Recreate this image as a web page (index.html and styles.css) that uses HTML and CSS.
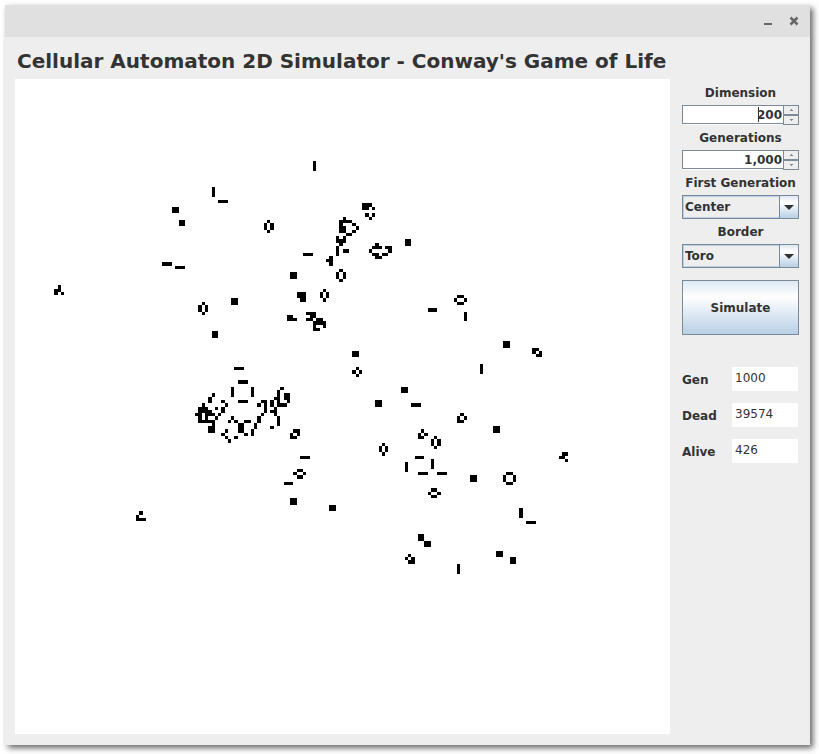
FILE: index.html
```html
<!DOCTYPE html>
<html lang="en">
<head>
<meta charset="utf-8">
<title>Cellular Automaton 2D Simulator</title>
<link rel="stylesheet" href="styles.css">
</head>
<body>
<div class="window">
  <header class="titlebar">
    <button class="winbtn" type="button" aria-label="Minimize"><svg width="10" height="10" viewBox="0 0 10 10"><path d="M1 8h8" stroke="#666" stroke-width="2"/></svg></button>
    <button class="winbtn" type="button" aria-label="Close"><svg width="10" height="10" viewBox="0 0 10 10"><path d="M1.5 1.5l7 7M8.5 1.5l-7 7" stroke="#666" stroke-width="2.5"/></svg></button>
  </header>
  <main class="content">
    <h1 class="heading">Cellular Automaton 2D Simulator - Conway's Game of Life</h1>
    <div class="columns">
      <svg class="board" id="board" viewBox="0 0 200 200" role="img" aria-label="Cell grid"></svg>
      <form class="side">
        <label class="label" for="dimension">Dimension</label>
        <div class="spinner">
          <input class="spin-input" id="dimension" type="text" value="200">
          <span class="caret"></span>
          <div class="spin-buttons">
            <button class="spin" type="button" aria-label="Increase dimension"><svg width="5" height="3" viewBox="0 0 5 3"><path d="M2 0h1v1h1v1H1V1h1z"/></svg></button>
            <button class="spin" type="button" aria-label="Decrease dimension"><svg width="5" height="3" viewBox="0 0 5 3"><path d="M1 0h3v1H3v1H2V1H1z"/></svg></button>
          </div>
        </div>
        <label class="label" for="generations">Generations</label>
        <div class="spinner">
          <input class="spin-input" id="generations" type="text" value="1,000">
          <div class="spin-buttons">
            <button class="spin" type="button" aria-label="Increase generations"><svg width="5" height="3" viewBox="0 0 5 3"><path d="M2 0h1v1h1v1H1V1h1z"/></svg></button>
            <button class="spin" type="button" aria-label="Decrease generations"><svg width="5" height="3" viewBox="0 0 5 3"><path d="M1 0h3v1H3v1H2V1H1z"/></svg></button>
          </div>
        </div>
        <label class="label" for="first">First Generation</label>
        <div class="combo">
          <select class="select" id="first"><option>Center</option></select>
          <span class="arrow"><svg width="10" height="5" viewBox="0 0 10 5"><path d="M0 0h10L5 5z"/></svg></span>
        </div>
        <label class="label" for="border">Border</label>
        <div class="combo">
          <select class="select" id="border"><option>Toro</option></select>
          <span class="arrow"><svg width="10" height="5" viewBox="0 0 10 5"><path d="M0 0h10L5 5z"/></svg></span>
        </div>
        <button class="simulate" type="button">Simulate</button>
        <div class="stats">
          <label class="stat-label" for="gen">Gen</label><input class="stat" id="gen" type="text" value="1000" readonly>
          <label class="stat-label" for="dead">Dead</label><input class="stat" id="dead" type="text" value="39574" readonly>
          <label class="stat-label" for="alive">Alive</label><input class="stat" id="alive" type="text" value="426" readonly>
        </div>
      </form>
    </div>
  </main>
</div>
<script src="board.js"></script>
</body>
</html>
```
FILE: styles.css
```css
* { box-sizing: border-box; }

body {
  margin: 0;
  padding: 5px 9px 9px 5px;
  background: #fff;
  color: #333;
  font: bold 12px/16px "DejaVu Sans", sans-serif;
}

input, select, button { font: inherit; color: inherit; margin: 0; }

.window {
  background: #eee;
  box-shadow: 3px 3px 6px rgba(0, 0, 0, 0.6);
}

.titlebar {
  display: flex;
  justify-content: flex-end;
  align-items: center;
  gap: 16px;
  height: 32px;
  padding-right: 11px;
  background: #e0e0e0;
}

.winbtn {
  display: flex;
  padding: 0;
  border: 0;
  background: none;
}

.content { padding: 12px 11px 11px 10px; }

.heading {
  margin: 0 0 6px 2px;
  font-size: 20px;
  line-height: 24px;
  white-space: nowrap;
}

.columns {
  display: flex;
  align-items: flex-start;
  gap: 12px;
}

.board {
  flex: 1;
  min-width: 0;
  aspect-ratio: 1;
  background: #fff;
  shape-rendering: crispEdges;
}

.side {
  display: flex;
  flex-direction: column;
  width: 117px;
  padding-top: 6px;
}

.label {
  margin-bottom: 4px;
  text-align: center;
  white-space: nowrap;
}

.spinner {
  position: relative;
  display: flex;
  height: 20px;
  margin-bottom: 5px;
}

.spin-input {
  flex: 1;
  min-width: 0;
  height: 19px;
  padding: 0 1px 0 0;
  border: 1px solid #7a8a99;
  border-right: 0;
  box-shadow: 0 1px 0 #fff;
  background: #fff;
  text-align: right;
}

.caret {
  position: absolute;
  right: 40px;
  top: 2px;
  width: 1px;
  height: 15px;
  background: #333;
}

.spin-buttons {
  display: flex;
  flex-direction: column;
  width: 16px;
}

.spin {
  display: flex;
  flex: 1;
  align-items: center;
  justify-content: center;
  padding: 0;
  border: 1px solid #7a8a99;
  background: #eee;
  fill: #7a8a99;
}

.combo {
  position: relative;
  display: flex;
  height: 24px;
  margin-bottom: 5px;
}

.select {
  flex: 1;
  appearance: none;
  padding: 0 0 0 2px;
  border: 1px solid #7a8a99;
  border-radius: 0;
  background: #eee;
  box-shadow: inset 0 0 0 1px #b8cfe5;
}

.arrow {
  position: absolute;
  inset: 0 0 0 auto;
  display: flex;
  align-items: center;
  justify-content: center;
  width: 20px;
  border: 1px solid #7a8a99;
  background: linear-gradient(#dde8f3, #fff 30%, #b8cfe5);
  fill: #333;
  pointer-events: none;
}

.simulate {
  height: 55px;
  margin-top: 7px;
  border: 1px solid #7a8a99;
  background: linear-gradient(#dde8f3, #fff 30%, #b8cfe5);
}

.stats {
  display: grid;
  grid-template-columns: 50px 1fr;
  gap: 12px 0;
  align-items: center;
  margin: 32px 1px 0 0;
}

.stat-label { padding-top: 2px; }

.stat {
  width: 100%;
  height: 24px;
  padding: 0 3px 3px;
  border: 0;
  background: #fff;
  font-weight: normal;
}
```
FILE: board.js
```javascript
const shapes = {
  block: "OO/OO",
  row: "OOO",
  col: "O/O/O",
  hiveV: ".O./O.O/O.O/.O.",
  hiveH: ".OO./O..O/.OO.",
  tub: ".O./O.O/.O.",
  boat: ".O./O.O/OO."
};

// Each entry: pattern, then the column and row of each top left cell.
const placed = [
  ["block", 48,39, 50,43, 66,67, 60,77, 119,49, 84,59, 103,83, 118,94, 110,98,
    139,121, 149,80, 146,106, 123,139, 125,141, 147,144, 151,146, 84,128, 96,130],
  ["row", 62,37, 45,56, 49,57, 88,53, 67,88, 68,92, 68,98, 87,115, 82,123,
    121,99, 122,115, 123,120, 129,120, 126,70, 156,135],
  ["col", 60,33, 91,25, 66,94, 72,94, 127,116, 119,117, 137,71, 142,87, 154,131, 135,148],
  ["hiveV", 76,43, 56,68, 98,58, 93,64, 127,109, 111,111],
  ["hiveH", 85,119, 126,125, 134,66],
  ["tub", 103,88],
  ["boat", 135,102, 123,107],
  [".O./OO./O.O", 12,63],
  [".O./O../OOO", 37,132],
  ["OOO./OO.O/..../.O.O/..O.", 106,38],
  ["..O..../.OOOO../.O...O./.OO...O/.OO..O./...OO../O.O..../OOO..../.O.....", 98,42],
  ["O.../O.OO/O...", 98,51],
  [".O/OO/.O", 95,54],
  ["..O..../.OOO.OO/O.....O/.OO.OO./..OO...", 108,50],
  ["OOO/OOO/.OO", 86,65],
  ["OO./OOO", 83,72],
  ["OOO.../.OO.../OO.OO./..OOOO/..O..O/..OO..", 89,71],
  ["OO./O.O/.OO", 158,82],
  [".OO/O.O/OO.", 84,107],
  [".OO/OO./..O", 166,114],
  [".OO./O..O/O..O/.OO.", 149,120],
  [".O./O.O/.OO", 119,145]
];

// Live columns of the large cluster, by row.
const cluster = {
  94: [81],
  95: [80],
  96: [60, 80, 82, 83],
  97: [59, 79, 80, 82, 83],
  98: [59, 63, 75, 76, 78, 80, 83],
  99: [57, 64, 74, 76, 78, 80, 81, 82],
  100: [56, 57, 58, 61, 63, 76, 79],
  101: [56, 57, 58, 59, 63, 76, 78, 79],
  102: [55, 56, 58, 59, 60, 62, 75, 79],
  103: [56, 58, 61, 66, 74, 80],
  104: [56, 57, 58, 59, 60, 65, 67, 70, 71, 74, 80],
  105: [60, 68, 69, 73, 80],
  106: [59, 60, 68, 69, 73, 78],
  107: [59, 60, 64, 68, 69, 72],
  108: [63, 70, 72],
  109: [64, 67],
  110: [65]
};

let d = "";
const cell = (x, y) => { d += `M${x} ${y}h1v1h-1z`; };

for (const [name, ...spots] of placed) {
  const rows = (shapes[name] || name).split("/");
  for (let i = 0; i < spots.length; i += 2) {
    rows.forEach((line, y) => {
      [...line].forEach((c, x) => {
        if (c === "O") cell(spots[i] + x, spots[i + 1] + y);
      });
    });
  }
}
for (const y in cluster) cluster[y].forEach(x => cell(x, y));

const path = document.createElementNS("http://www.w3.org/2000/svg", "path");
path.setAttribute("d", d);
document.getElementById("board").append(path);
```
